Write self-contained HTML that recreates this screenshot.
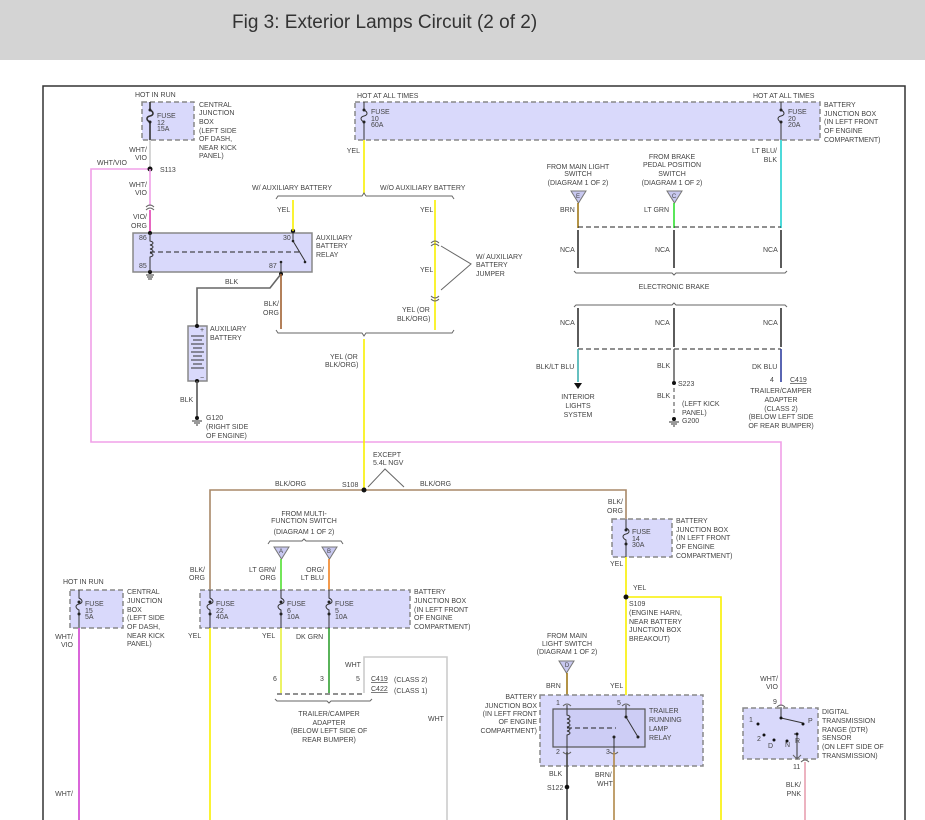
<!DOCTYPE html>
<html><head><meta charset="utf-8"><style>
html,body{margin:0;padding:0;background:#fff;width:925px;height:820px;overflow:hidden}
.hdr{position:absolute;left:0;top:0;width:925px;height:60px;background:#d4d4d4}
.hdr span{position:absolute;left:232px;top:12px;font:19px "Liberation Sans",sans-serif;color:#333}
svg{position:absolute;left:0;top:0}
text{font-family:"Liberation Sans",sans-serif;font-size:7px;fill:#444}
.m{text-anchor:middle}.e{text-anchor:end}
.box{fill:#d9d9fb;stroke:#888;stroke-width:1.5;stroke-dasharray:5 3}
.sb{fill:#d9d9fb;stroke:#888;stroke-width:1.5}
.w{fill:none;stroke-width:1.6}
.br{fill:none;stroke:#666;stroke-width:1}
.ds{fill:none;stroke:#222;stroke-width:1;stroke-dasharray:5 3}
</style></head><body>
<div class="hdr"><span>Fig 3: Exterior Lamps Circuit (2 of 2)</span></div>
<svg width="925" height="820" viewBox="0 0 925 820">
<!-- frame -->
<path d="M43 820V86H905V820" fill="none" stroke="#333" stroke-width="1.5"/>

<!-- ===== TOP ===== -->
<text x="135" y="97">HOT IN RUN</text>
<rect class="box" x="142" y="102" width="52" height="38"/>
<path d="M150 102v8c4 2 4 5 0 6c-4 1-4 4 0 6v18" class="w" stroke="#333" stroke-width="1"/>
<circle cx="150" cy="110" r="1.5" fill="#222"/><circle cx="150" cy="122" r="1.5" fill="#222"/>
<text x="157" y="118">FUSE</text><text x="157" y="125">12</text><text x="157" y="131">15A</text>
<text x="199" y="107">CENTRAL</text><text x="199" y="115">JUNCTION</text><text x="199" y="124">BOX</text><text x="199" y="133">(LEFT SIDE</text><text x="199" y="141">OF DASH,</text><text x="199" y="150">NEAR KICK</text><text x="199" y="158">PANEL)</text>
<path d="M150 140V168" class="w" stroke="#ccc"/>
<text class="e" x="147" y="152">WHT/</text><text class="e" x="147" y="160">VIO</text>
<text x="97" y="165">WHT/VIO</text>
<path d="M150 169H91V442H781V706" class="w" stroke="#f0a0e8"/>
<circle cx="150" cy="169" r="2.5" fill="#111"/><text x="160" y="172">S113</text>
<path d="M150 169V206" class="w" stroke="#f0a0e8"/>
<text class="e" x="147" y="187">WHT/</text><text class="e" x="147" y="195">VIO</text>
<path d="M146 210q4-4 8 0M146 207q4-4 8 0" class="br"/>
<path d="M150 210V232" class="w" stroke="#e040b0" stroke-width="2"/>
<text class="e" x="147" y="219">VIO/</text><text class="e" x="147" y="228">ORG</text>
<!-- relay -->
<rect class="sb" x="133" y="233" width="179" height="39"/>
<circle cx="150" cy="233" r="2" fill="#111"/><circle cx="150" cy="272" r="2" fill="#111"/>
<path d="M150 233v8c4 1 4 3 0 4c4 1 4 3 0 4c4 1 4 3 0 4c4 1 4 3 0 4v15" fill="none" stroke="#333"/>
<path d="M150 252H300" class="ds"/>
<text x="139" y="240">86</text><text x="139" y="268">85</text>
<path d="M146 275h8M147 277h6M148 279h4" stroke="#333"/>
<circle cx="293" cy="231" r="2.2" fill="#111"/>
<path d="M293 231v10l12 20" fill="none" stroke="#333"/><circle cx="293" cy="241" r="1.3" fill="#222"/><circle cx="305" cy="262" r="1.3" fill="#222"/>
<text x="283" y="240">30</text><text x="269" y="268">87</text>
<path d="M281 262V272" stroke="#333"/><circle cx="281" cy="262" r="1.3" fill="#222"/><circle cx="281" cy="274" r="2" fill="#111"/>
<text x="316" y="240">AUXILIARY</text><text x="316" y="248">BATTERY</text><text x="316" y="257">RELAY</text>
<path d="M281 274L270 288H197V326" class="w" stroke="#666"/>
<text x="225" y="284">BLK</text>
<path d="M281 274V329" class="w" stroke="#a06030"/>
<text class="e" x="279" y="306">BLK/</text><text class="e" x="279" y="315">ORG</text>
<!-- battery -->
<rect class="sb" x="188" y="326" width="19" height="55"/>
<path d="M191 336h13M193 340h9M191 344h13M193 348h9M191 352h13M193 356h9M191 360h13M193 364h9M191 368h13" stroke="#333"/>
<text x="200" y="332">+</text><text x="200" y="380">−</text>
<circle cx="197" cy="326" r="2" fill="#111"/><circle cx="197" cy="381" r="2" fill="#111"/>
<text x="210" y="331">AUXILIARY</text><text x="210" y="340">BATTERY</text>
<path d="M197 381V418" class="w" stroke="#555"/><text x="180" y="402">BLK</text>
<circle cx="197" cy="418" r="2" fill="#111"/><path d="M192 421h10M194 423h6M196 425h2" stroke="#333"/>
<text x="206" y="420">G120</text><text x="206" y="429">(RIGHT SIDE</text><text x="206" y="438">OF ENGINE)</text>

<!-- big BJB top -->
<text x="357" y="98">HOT AT ALL TIMES</text><text x="753" y="98">HOT AT ALL TIMES</text>
<rect class="box" x="355" y="102" width="465" height="38"/>
<path d="M364 102v8c4 2 4 5 0 6c-4 1-4 4 0 6v18" fill="none" stroke="#333"/>
<circle cx="364" cy="110" r="1.5" fill="#222"/><circle cx="364" cy="122" r="1.5" fill="#222"/>
<text x="371" y="114">FUSE</text><text x="371" y="121">10</text><text x="371" y="127">60A</text>
<path d="M781 102v8c4 2 4 5 0 6c-4 1-4 4 0 6v18" fill="none" stroke="#333"/>
<circle cx="781" cy="110" r="1.5" fill="#222"/><circle cx="781" cy="122" r="1.5" fill="#222"/>
<text x="788" y="114">FUSE</text><text x="788" y="121">20</text><text x="788" y="127">20A</text>
<text x="824" y="107">BATTERY</text><text x="824" y="116">JUNCTION BOX</text><text x="824" y="124">(IN LEFT FRONT</text><text x="824" y="133">OF ENGINE</text><text x="824" y="142">COMPARTMENT)</text>
<path d="M364 140V194" class="w" stroke="#f8f000" stroke-width="2"/><text class="e" x="360" y="153">YEL</text>
<text x="252" y="190">W/ AUXILIARY BATTERY</text><text x="380" y="190">W/O AUXILIARY BATTERY</text>
<path d="M276 199l2-3H362l2-3 2 3H452l2 3" class="br"/>
<path d="M293 200V231" class="w" stroke="#f8f000" stroke-width="2"/><text x="277" y="212">YEL</text>
<path d="M435 200V330" class="w" stroke="#f8f000" stroke-width="2"/>
<text x="420" y="212">YEL</text><text x="420" y="272">YEL</text><text x="402" y="312">YEL (OR</text><text x="397" y="321">BLK/ORG)</text>
<path d="M431 246q4-4 8 0M431 243q4-4 8 0M431 296q4 4 8 0M431 299q4 4 8 0" class="br"/>
<path d="M441 246L471 264L441 290" class="br"/>
<text x="476" y="259">W/ AUXILIARY</text><text x="476" y="267">BATTERY</text><text x="476" y="276">JUMPER</text>
<path d="M276 330l2 3H362l2 3 2-3H452l2-3" class="br"/>
<path d="M364 339V488" class="w" stroke="#f8f000" stroke-width="2"/>
<text x="330" y="359">YEL (OR</text><text x="325" y="367">BLK/ORG)</text>

<!-- right top column -->
<text class="m" x="578" y="169">FROM MAIN LIGHT</text><text class="m" x="578" y="176">SWITCH</text><text class="m" x="578" y="185">(DIAGRAM 1 OF 2)</text>
<path d="M571 191h15l-7.5 12z" fill="#c8c8f0" stroke="#777"/><text class="m" x="578" y="198" style="font-size:6px">E</text>
<path d="M578 203V228" class="w" stroke="#a07818" stroke-width="2"/><text x="560" y="212">BRN</text>
<text class="m" x="672" y="159">FROM BRAKE</text><text class="m" x="672" y="167">PEDAL POSITION</text><text class="m" x="672" y="176">SWITCH</text><text class="m" x="672" y="185">(DIAGRAM 1 OF 2)</text>
<path d="M667 191h15l-7.5 12z" fill="#c8c8f0" stroke="#777"/><text class="m" x="674" y="198" style="font-size:6px">C</text>
<path d="M674 203V228" class="w" stroke="#30e030" stroke-width="2"/><text x="644" y="212">LT GRN</text>
<path d="M781 140V228" class="w" stroke="#20d0d0" stroke-width="2"/>
<text class="e" x="777" y="153">LT BLU/</text><text class="e" x="777" y="162">BLK</text>
<path d="M578 227H781" class="ds"/>
<path d="M578 230V268M674 230V268M781 230V268" class="w" stroke="#333"/>
<text x="560" y="252">NCA</text><text x="655" y="252">NCA</text><text x="763" y="252">NCA</text>
<path d="M574 271l2 2H672l2 2 2-2H785l2-2" class="br"/>
<text class="m" x="674" y="289">ELECTRONIC BRAKE</text>
<path d="M574 307l2-2H672l2-2 2 2H785l2 2" class="br"/>
<path d="M578 308V347M674 308V347M781 308V347" class="w" stroke="#333"/>
<text x="560" y="325">NCA</text><text x="655" y="325">NCA</text><text x="763" y="325">NCA</text>
<path d="M578 349H781" class="ds"/>
<path d="M578 349V382" class="w" stroke="#40b0b0"/><path d="M574 383h8l-4 6z" fill="#111"/>
<text x="536" y="369">BLK/LT BLU</text>
<text class="m" x="578" y="399">INTERIOR</text><text class="m" x="578" y="408">LIGHTS</text><text class="m" x="578" y="417">SYSTEM</text>
<path d="M674 349V383" class="w" stroke="#666"/><circle cx="674" cy="383" r="2" fill="#111"/>
<text x="678" y="386">S223</text><text x="657" y="368">BLK</text><text x="657" y="398">BLK</text>
<path d="M674 388V415" stroke="#444" stroke-dasharray="4 3"/>
<circle cx="674" cy="419" r="2" fill="#111"/><path d="M669 422h10M671 424h6M673 426h2" stroke="#333"/>
<text x="682" y="406">(LEFT KICK</text><text x="682" y="415">PANEL)</text><text x="682" y="423">G200</text>
<path d="M781 349V382" class="w" stroke="#3040a0" stroke-width="2"/>
<text x="752" y="369">DK BLU</text><text x="770" y="382">4</text><text x="790" y="382" text-decoration="underline">C419</text>
<text class="m" x="781" y="393">TRAILER/CAMPER</text><text class="m" x="781" y="402">ADAPTER</text><text class="m" x="781" y="411">(CLASS 2)</text><text class="m" x="781" y="419">(BELOW LEFT SIDE</text><text class="m" x="781" y="428">OF REAR BUMPER)</text>

<!-- ===== BOTTOM ===== -->
<text x="373" y="457">EXCEPT</text><text x="373" y="465">5.4L NGV</text>
<path d="M368 487L385 469L404 487" class="br"/>
<path d="M210 591V490H626V519" class="w" stroke="#a88868"/>
<circle cx="364" cy="490" r="2.5" fill="#111"/>
<text x="342" y="487">S108</text><text x="275" y="486">BLK/ORG</text><text x="420" y="486">BLK/ORG</text>
<text class="e" x="205" y="572">BLK/</text><text class="e" x="205" y="580">ORG</text>
<!-- left CJB -->
<text x="63" y="584">HOT IN RUN</text>
<rect class="box" x="70" y="590" width="53" height="38"/>
<path d="M79 590v8c4 2 4 5 0 6c-4 1-4 4 0 6v18" fill="none" stroke="#333"/>
<circle cx="79" cy="602" r="1.5" fill="#222"/><circle cx="79" cy="614" r="1.5" fill="#222"/>
<text x="85" y="606">FUSE</text><text x="85" y="613">15</text><text x="85" y="619">5A</text>
<text x="127" y="594">CENTRAL</text><text x="127" y="603">JUNCTION</text><text x="127" y="612">BOX</text><text x="127" y="620">(LEFT SIDE</text><text x="127" y="629">OF DASH,</text><text x="127" y="638">NEAR KICK</text><text x="127" y="646">PANEL)</text>
<path d="M79 628V820" class="w" stroke="#d040d0"/>
<text class="e" x="73" y="639">WHT/</text><text class="e" x="73" y="647">VIO</text><text class="e" x="73" y="796">WHT/</text>
<!-- multi-function -->
<text class="m" x="304" y="516">FROM MULTI-</text><text class="m" x="304" y="523">FUNCTION SWITCH</text><text class="m" x="304" y="534">(DIAGRAM 1 OF 2)</text>
<path d="M268 544l2-3H302l2-2 2 2H341l2 3" class="br"/>
<path d="M274 547h15l-7.5 12z" fill="#c8c8f0" stroke="#777"/><text class="m" x="281" y="553" style="font-size:6px">A</text>
<path d="M322 547h15l-7.5 12z" fill="#c8c8f0" stroke="#777"/><text class="m" x="329" y="553" style="font-size:6px">B</text>
<path d="M281 559V590" class="w" stroke="#50e030" stroke-width="2"/>
<path d="M329 559V590" class="w" stroke="#f08020" stroke-width="2"/>
<text class="e" x="276" y="572">LT GRN/</text><text class="e" x="276" y="580">ORG</text>
<text class="e" x="324" y="572">ORG/</text><text class="e" x="324" y="580">LT BLU</text>
<rect class="box" x="200" y="590" width="210" height="38"/>
<g fill="none" stroke="#333"><path d="M210 590v8c4 2 4 5 0 6c-4 1-4 4 0 6v18"/><path d="M281 590v8c4 2 4 5 0 6c-4 1-4 4 0 6v18"/><path d="M329 590v8c4 2 4 5 0 6c-4 1-4 4 0 6v18"/></g>
<g fill="#222"><circle cx="210" cy="602" r="1.5"/><circle cx="210" cy="614" r="1.5"/><circle cx="281" cy="602" r="1.5"/><circle cx="281" cy="614" r="1.5"/><circle cx="329" cy="602" r="1.5"/><circle cx="329" cy="614" r="1.5"/></g>
<text x="216" y="606">FUSE</text><text x="216" y="613">22</text><text x="216" y="619">40A</text>
<text x="287" y="606">FUSE</text><text x="287" y="613">6</text><text x="287" y="619">10A</text>
<text x="335" y="606">FUSE</text><text x="335" y="613">5</text><text x="335" y="619">10A</text>
<text x="414" y="594">BATTERY</text><text x="414" y="603">JUNCTION BOX</text><text x="414" y="612">(IN LEFT FRONT</text><text x="414" y="620">OF ENGINE</text><text x="414" y="629">COMPARTMENT)</text>
<path d="M210 628V820" class="w" stroke="#f8f000" stroke-width="2"/><text x="188" y="638">YEL</text>
<path d="M281 628V693" class="w" stroke="#e8f040" stroke-width="2"/><text x="262" y="638">YEL</text>
<path d="M329 628V693" class="w" stroke="#30a030" stroke-width="2"/><text x="296" y="639">DK GRN</text>
<path d="M364 693V657H447V820" class="w" stroke="#ccc"/>
<text x="345" y="667">WHT</text><text x="428" y="721">WHT</text>
<text x="273" y="681">6</text><text x="320" y="681">3</text><text x="356" y="681">5</text>
<text x="371" y="681" text-decoration="underline">C419</text><text x="394" y="682">(CLASS 2)</text>
<text x="371" y="691" text-decoration="underline">C422</text><text x="394" y="693">(CLASS 1)</text>
<path d="M277 694H365" class="ds"/>
<path d="M275 699l2 2H327l2 2 2-2H370l2-2" class="br"/>
<text class="m" x="329" y="716">TRAILER/CAMPER</text><text class="m" x="329" y="725">ADAPTER</text><text class="m" x="329" y="733">(BELOW LEFT SIDE OF</text><text class="m" x="329" y="742">REAR BUMPER)</text>

<!-- fuse 14 -->
<text class="e" x="623" y="504">BLK/</text><text class="e" x="623" y="513">ORG</text>
<rect class="box" x="612" y="519" width="60" height="38"/>
<path d="M626 519v9c4 2 4 5 0 6c-4 1-4 4 0 6v17" fill="none" stroke="#333"/>
<circle cx="626" cy="530" r="1.5" fill="#222"/><circle cx="626" cy="544" r="1.5" fill="#222"/>
<text x="632" y="534">FUSE</text><text x="632" y="541">14</text><text x="632" y="547">30A</text>
<text x="676" y="523">BATTERY</text><text x="676" y="532">JUNCTION BOX</text><text x="676" y="540">(IN LEFT FRONT</text><text x="676" y="549">OF ENGINE</text><text x="676" y="558">COMPARTMENT)</text>
<path d="M626 557V705M626 597H721V820" class="w" stroke="#f8f000" stroke-width="2"/>
<circle cx="626" cy="597" r="2.5" fill="#111"/>
<text x="610" y="566">YEL</text><text x="633" y="590">YEL</text>
<text x="629" y="606">S109</text><text x="629" y="615">(ENGINE HARN,</text><text x="629" y="624">NEAR BATTERY</text><text x="629" y="632">JUNCTION BOX</text><text x="629" y="641">BREAKOUT)</text>
<text class="m" x="567" y="638">FROM MAIN</text><text class="m" x="567" y="646">LIGHT SWITCH</text><text class="m" x="567" y="654">(DIAGRAM 1 OF 2)</text>
<path d="M559 661h15l-7.5 12z" fill="#c8c8f0" stroke="#777"/><text class="m" x="567" y="667" style="font-size:6px">D</text>
<path d="M567 673V705" class="w" stroke="#a07818" stroke-width="2"/>
<text x="546" y="688">BRN</text><text x="610" y="688">YEL</text>
<rect class="box" x="540" y="695" width="163" height="71"/>
<rect x="553" y="709" width="92" height="38" fill="#cdcdf5" stroke="#555" stroke-width="1.2"/>
<path d="M567 705V715c4 1 4 3 0 4c4 1 4 3 0 4c4 1 4 3 0 4c4 1 4 3 0 4c4 1 4 3 0 4V752" fill="none" stroke="#333"/>
<path d="M567 728H616" class="ds"/>
<path d="M626 705V717l12 20" fill="none" stroke="#333"/><circle cx="626" cy="717" r="1.5" fill="#222"/><circle cx="638" cy="737" r="1.5" fill="#222"/>
<path d="M614 737V752" stroke="#333"/><circle cx="614" cy="737" r="1.5" fill="#222"/>
<path d="M563 706q4-4 8 0M622 706q4-4 8 0M563 752q4 4 8 0M610 752q4 4 8 0" class="br"/>
<text x="556" y="705">1</text><text x="617" y="705">5</text><text x="556" y="754">2</text><text x="606" y="754">3</text>
<text class="e" x="537" y="699">BATTERY</text><text class="e" x="537" y="708">JUNCTION BOX</text><text class="e" x="537" y="716">(IN LEFT FRONT</text><text class="e" x="537" y="724">OF ENGINE</text><text class="e" x="537" y="733">COMPARTMENT)</text>
<text x="649" y="713">TRAILER</text><text x="649" y="722">RUNNING</text><text x="649" y="731">LAMP</text><text x="649" y="740">RELAY</text>
<path d="M567 752V820" class="w" stroke="#444"/><circle cx="567" cy="787" r="2.3" fill="#111"/>
<path d="M614 752V820" class="w" stroke="#b08848" stroke-width="2"/>
<text x="549" y="776">BLK</text><text x="547" y="790">S122</text><text x="595" y="777">BRN/</text><text x="597" y="786">WHT</text>
<!-- DTR -->
<text class="e" x="778" y="681">WHT/</text><text class="e" x="778" y="689">VIO</text><text x="773" y="704">9</text>
<rect class="box" x="743" y="708" width="75" height="51"/>
<path d="M777 707q4-4 8 0" class="br"/>
<path d="M781 707V718L803 723M797 734V759" fill="none" stroke="#333"/>
<path d="M797 734h-3" stroke="#333"/>
<g fill="#111"><circle cx="781" cy="718" r="1.5"/><circle cx="803" cy="724" r="1.5"/><circle cx="758" cy="724" r="1.5"/><circle cx="764" cy="735" r="1.5"/><circle cx="787" cy="741" r="1.5"/><circle cx="774" cy="740" r="1.5"/><circle cx="797" cy="734" r="1.5"/></g>
<path d="M793 755l4 4 4-4" class="br"/>
<text x="749" y="722">1</text><text x="757" y="741">2</text><text x="768" y="748">D</text><text x="785" y="747">N</text><text x="795" y="743">R</text><text x="808" y="723">P</text>
<text x="822" y="714">DIGITAL</text><text x="822" y="723">TRANSMISSION</text><text x="822" y="732">RANGE (DTR)</text><text x="822" y="740">SENSOR</text><text x="822" y="749">(ON LEFT SIDE OF</text><text x="822" y="758">TRANSMISSION)</text>
<path d="M805 762V820" class="w" stroke="#e8a0b0" stroke-width="2"/>
<path d="M801 762q4-4 8 0" class="br"/>
<text x="793" y="769">11</text><text class="e" x="801" y="787">BLK/</text><text class="e" x="801" y="796">PNK</text>
</svg>
</body></html>
